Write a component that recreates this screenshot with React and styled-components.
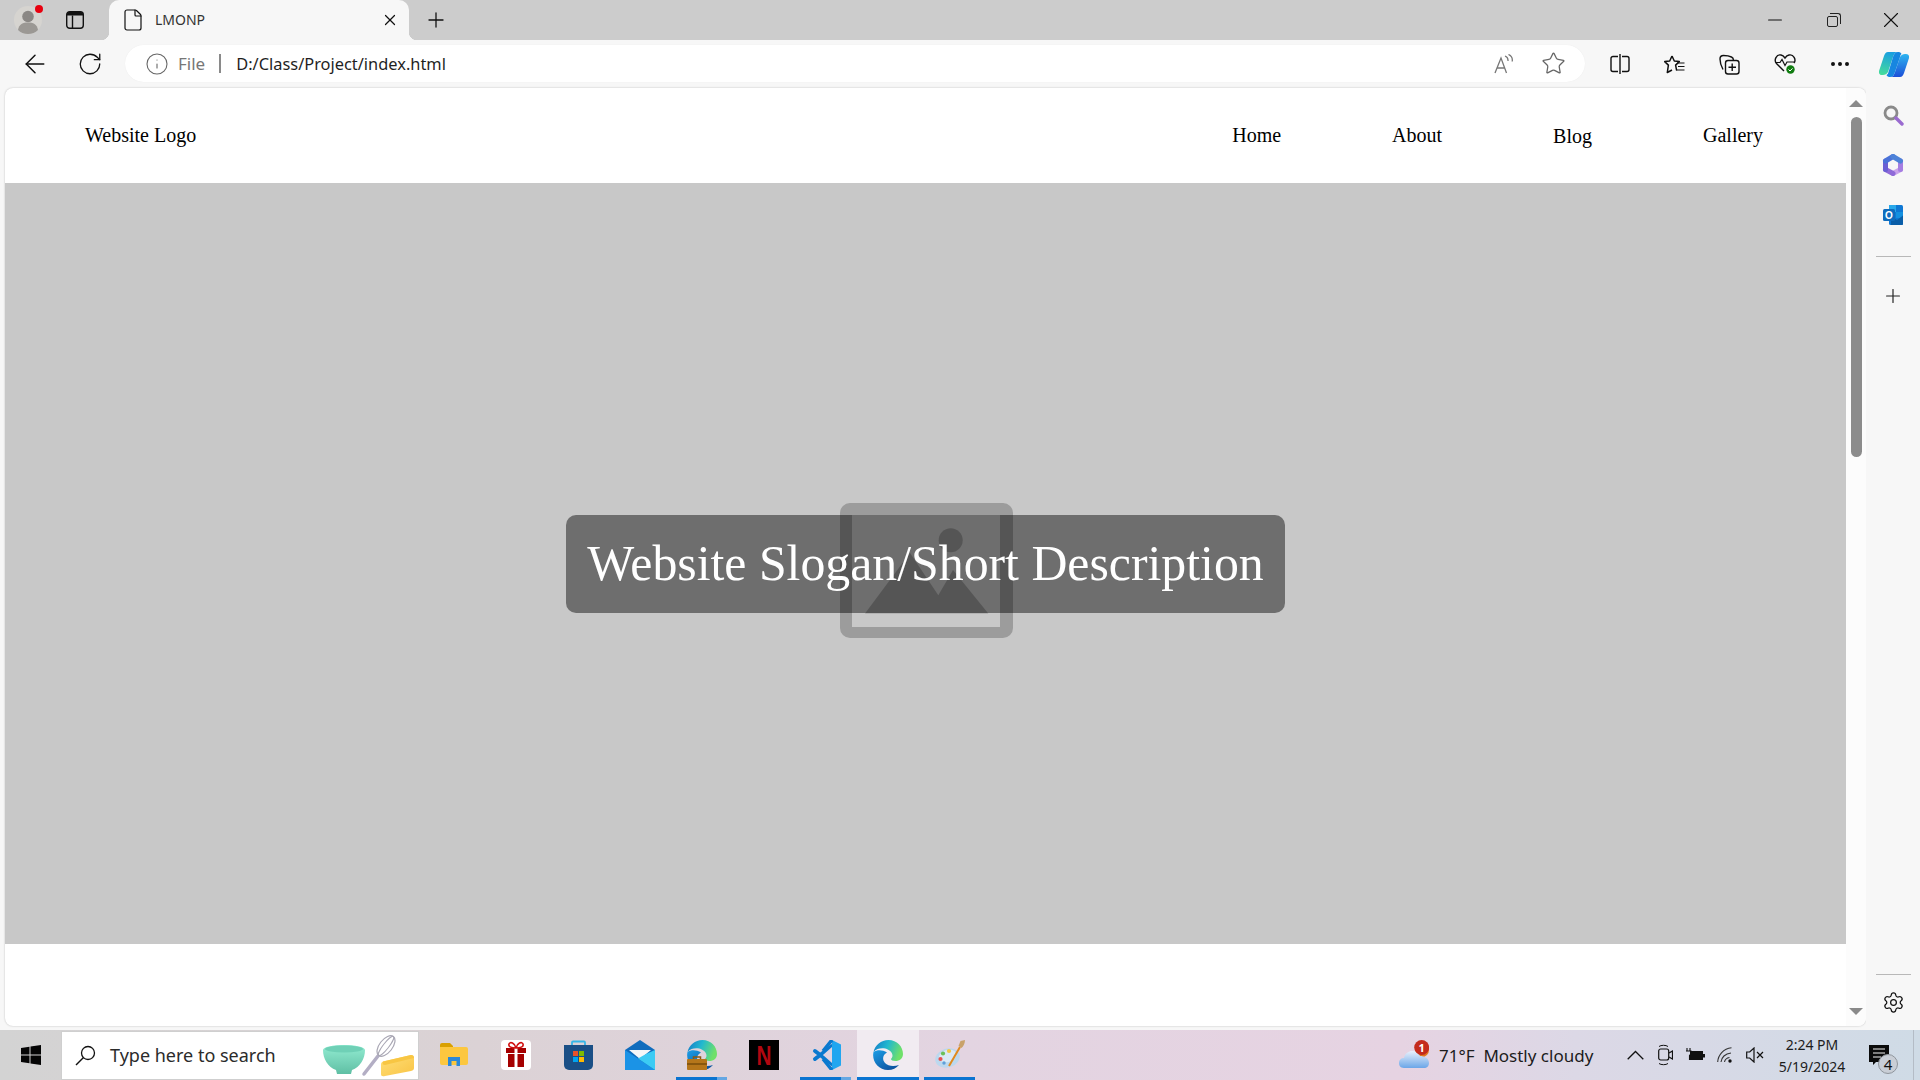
import React from 'react';
import styled, { createGlobalStyle } from 'styled-components';
import {
  ArrowLeft,
  RotateCw,
  Info,
  Star,
  Plus,
  X,
  Minus,
  Settings,
  Ellipsis,
  File as FileIcon,
} from 'lucide-react';

const GlobalStyle = createGlobalStyle`
  html, body {
    margin: 0;
    padding: 0;
    background: #f7f7f7;
  }
  body {
    font-family: "Noto Sans", "Open Sans", sans-serif;
    overflow: hidden;
  }
  * {
    box-sizing: border-box;
  }
`;

const Screen = styled.div`
  width: 1920px;
  height: 1080px;
  display: flex;
  flex-direction: column;
  overflow: hidden;
`;

/* browser chrome */
const TabStrip = styled.div`
  height: 40px;
  background: #cccccc;
  display: flex;
  align-items: center;
  padding-left: 14px;
  flex-shrink: 0;
`;

const Avatar = styled.div`
  position: relative;
  width: 28px;
  height: 28px;
  border-radius: 50%;
  background: #d6d4d0;
  overflow: visible;
  display: flex;
  margin-right: 24px;
  &::after {
    content: '';
    position: absolute;
    top: -1px;
    right: -1px;
    width: 8px;
    height: 8px;
    border-radius: 50%;
    background: #e8000f;
  }
`;

const TabsButton = styled.div`
  width: 18px;
  height: 18px;
  display: flex;
  margin-right: 25px;
`;

const Tab = styled.div`
  position: relative;
  width: 300px;
  height: 40px;
  background: #f7f7f7;
  border-radius: 10px 10px 0 0;
  display: flex;
  align-items: center;
  padding: 0 10px 1px 12px;
  color: #333333;
  font-size: 14px;
  &::before,
  &::after {
    content: '';
    position: absolute;
    bottom: 0;
    width: 8px;
    height: 8px;
  }
  &::before {
    left: -8px;
    background: radial-gradient(circle at 0 0, transparent 8px, #f7f7f7 8.5px);
  }
  &::after {
    right: -8px;
    background: radial-gradient(circle at 100% 0, transparent 8px, #f7f7f7 8.5px);
  }
`;

const TabTitle = styled.span`
  flex: 1;
  margin-left: 10px;
`;

const NewTab = styled.div`
  width: 54px;
  display: flex;
  justify-content: center;
`;

const WindowControls = styled.div`
  margin-left: auto;
  display: flex;
  height: 40px;
`;

const WindowButton = styled.div`
  width: 58px;
  display: flex;
  align-items: center;
  justify-content: center;
`;

const RestoreIcon = styled.div`
  position: relative;
  width: 11px;
  height: 11px;
  border: 1px solid #222;
  border-radius: 2px;
  margin-top: 2px;
  margin-right: 2px;
  &::after {
    content: '';
    position: absolute;
    top: -4px;
    right: -4px;
    width: 10px;
    height: 10px;
    border-top: 1px solid #222;
    border-right: 1px solid #222;
    border-radius: 0 3px 0 0;
  }
`;

const Toolbar = styled.div`
  height: 48px;
  background: #f7f7f7;
  display: flex;
  align-items: center;
  padding-left: 7px;
  flex-shrink: 0;
`;

const ToolSlot = styled.div`
  width: ${({ $w }) => $w || 55}px;
  height: 37px;
  display: flex;
  align-items: center;
  justify-content: center;
  flex-shrink: 0;
`;

const AddressBar = styled.div`
  width: 1460px;
  height: 37px;
  margin: -1px 7px 0 8px;
  background: #ffffff;
  border-radius: 19px;
  display: flex;
  align-items: center;
  padding: 0 19px 0 20px;
  box-shadow: 0 0 1px rgba(0, 0, 0, 0.08);
`;

const FileLabel = styled.span`
  margin-left: 9px;
  font-size: 17px;
  color: #777777;
`;

const Divider = styled.span`
  width: 2px;
  height: 19px;
  margin: 0 15px 0 14px;
  background: #8a8a8a;
`;

const Url = styled.span`
  flex: 1;
  font-size: 16.4px;
  color: #1f1f1f;
`;

const AddressActions = styled.div`
  display: flex;
  align-items: center;
  gap: 27px;
`;

/* page area */
const Body = styled.div`
  flex: 1;
  display: flex;
  min-height: 0;
`;

const Page = styled.div`
  width: 1861px;
  height: 938px;
  margin-left: 5px;
  background: #ffffff;
  border-radius: 8px;
  box-shadow: 0 0 2px rgba(0, 0, 0, 0.25);
  overflow: hidden;
  display: flex;
`;

const Viewport = styled.div`
  width: 1841px;
  display: flex;
  flex-direction: column;
`;

const Nav = styled.nav`
  height: 95px;
  display: flex;
  align-items: center;
  justify-content: space-between;
  padding: 0 83px 0 80px;
  flex-shrink: 0;
  font-family: "Liberation Serif", "Times New Roman", serif;
  font-size: 20px;
  color: #000000;
`;

const NavList = styled.div`
  display: flex;
  align-items: center;
  gap: 111px;
`;

const NavLink = styled.a`
  padding-top: ${({ $drop }) => ($drop ? 2 : 0)}px;
`;

const Hero = styled.section`
  height: 761px;
  background: #c8c8c8;
  display: grid;
  place-items: center;
  flex-shrink: 0;
  > * {
    grid-area: 1 / 1;
  }
`;

const BrokenImage = styled.svg`
  width: 173px;
  height: 135px;
  margin: 13px 0 0 2px;
`;

const Slogan = styled.h1`
  margin: 0;
  padding: 20px 21px;
  background: rgba(0, 0, 0, 0.45);
  border-radius: 10px;
  color: #ffffff;
  font-family: "Liberation Serif", "Times New Roman", serif;
  font-size: 49.8px;
  line-height: 58px;
  font-weight: 400;
  white-space: nowrap;
`;

const Scrollbar = styled.div`
  width: 20px;
  background: #fcfcfc;
  display: flex;
  flex-direction: column;
  align-items: center;
  padding: 12px 0 11px;
`;

const Arrow = styled.div`
  width: 0;
  height: 0;
  border-left: 7px solid transparent;
  border-right: 7px solid transparent;
  ${({ $down }) =>
    $down
      ? 'border-top: 7px solid #8a8a8a; margin-top: auto;'
      : 'border-bottom: 7px solid #8a8a8a;'}
`;

const Thumb = styled.div`
  width: 11px;
  height: 340px;
  margin-top: 10px;
  border-radius: 6px;
  background: #8c8c8c;
`;

const Sidebar = styled.aside`
  width: 54px;
  display: flex;
  flex-direction: column;
  align-items: center;
  background: #f7f7f7;
  padding: 2px 0 3px;
`;

const SideButton = styled.div`
  width: 54px;
  height: 50px;
  display: flex;
  align-items: center;
  justify-content: center;
  flex-shrink: 0;
`;

const SideRule = styled.div`
  width: 35px;
  height: 1px;
  background: #b8b8b8;
  flex-shrink: 0;
  margin: ${({ $bottom }) => ($bottom ? 'auto 0 2px' : '16px 0 14px')};
`;

/* windows taskbar */
const Taskbar = styled.footer`
  height: 50px;
  flex-shrink: 0;
  display: flex;
  align-items: stretch;
  background: linear-gradient(90deg, #d3d3d3 0%, #dbd2d5 25%, #e3d4e1 50%, #e6d3e2 73%, #dcd8e6 82%, #cfdbe6 100%);
`;

const StartButton = styled.div`
  width: 61px;
  display: flex;
  align-items: center;
  justify-content: center;
`;

const SearchBox = styled.div`
  width: 358px;
  height: 49px;
  margin-top: 1px;
  background: #ffffff;
  border: 1px solid #cfcfcf;
  display: flex;
  align-items: center;
  padding: 0 3px 0 13px;
  color: #2b2b2b;
  font-size: 18px;
`;

const SearchText = styled.span`
  flex: 1;
  margin: 0 0 2px 14px;
`;

const Apps = styled.div`
  display: flex;
  margin-left: 4px;
`;

const AppButton = styled.div`
  position: relative;
  width: 62px;
  display: flex;
  align-items: center;
  justify-content: center;
  background: ${({ $active }) => ($active ? '#f1ebf1' : 'transparent')};
  &::after {
    content: '';
    display: ${({ $open }) => ($open ? 'block' : 'none')};
    position: absolute;
    bottom: 0;
    left: ${({ $active }) => ($active ? 0 : 5)}px;
    right: ${({ $active }) => ($active ? 0 : 6)}px;
    height: 3px;
    background: ${({ $stack }) =>
      $stack ? 'linear-gradient(90deg, #0a74d1 80%, #65a7e3 80%)' : '#0a74d1'};
  }
`;

const Tray = styled.div`
  margin-left: auto;
  display: flex;
  align-items: center;
`;

const Weather = styled.div`
  width: 221px;
  display: flex;
  align-items: center;
  color: #1c1c1c;
  font-size: 17px;
  white-space: pre;
`;

const WeatherText = styled.span`
  margin-left: 10px;
`;

const TraySlot = styled.div`
  width: 30px;
  display: flex;
  justify-content: center;
`;

const Clock = styled.div`
  width: 84px;
  display: flex;
  flex-direction: column;
  align-items: center;
  gap: 1px;
  color: #1c1c1c;
  font-size: 14px;
  line-height: 21px;
`;

const Notifications = styled.div`
  position: relative;
  width: 60px;
  height: 50px;
  padding: 15px 0 0 15px;
  border-right: 1px solid #b4bcc6;
  margin-right: 6px;
`;

const CountBadge = styled.div`
  position: absolute;
  left: 24px;
  top: 24px;
  width: 20px;
  height: 20px;
  border-radius: 50%;
  border: 1px solid #8f959c;
  background: #c9ced6;
  color: #111111;
  font-size: 15px;
  line-height: 18px;
  text-align: center;
`;

const MiniSvg = ({ w, h = w, vb, children }) => (
  <svg width={w} height={h} viewBox={vb || `0 0 ${w} ${h}`} fill="none">
    {children}
  </svg>
);

const Person = () => (
  <MiniSvg w={28} vb="0 0 28 28">
    <circle cx="14" cy="10.5" r="5.8" fill="#8a8784" />
    <path d="M4 24c1-6 5-7.5 10-7.5S23 18 24 24c-2.5 2.5-6 4-10 4s-7.5-1.5-10-4z" fill="#9b9894" />
  </MiniSvg>
);

const TabsIcon = () => (
  <MiniSvg w={18}>
    <rect x="0.7" y="0.7" width="16.6" height="16.6" rx="3" stroke="#111" strokeWidth="1.4" />
    <path d="M1 4.5V3a2 2 0 0 1 2-2h12a2 2 0 0 1 2 2v1.5z" fill="#111" />
    <path d="M6.5 4.5v12.5" stroke="#111" strokeWidth="1.4" />
  </MiniSvg>
);

const ReadAloud = () => (
  <MiniSvg w={20} vb="0 0 20 20">
    <path d="M1 19L7 4l5.5 15M3 14h8" stroke="#777" strokeWidth="1.3" />
    <path d="M11 2c2 .7 3.2 2.6 3 5M14.500 0.500c2.700 1.200 4.200 4 3.700 7" stroke="#777" strokeWidth="1.3" />
  </MiniSvg>
);

const SplitIcon = () => (
  <MiniSvg w={20} vb="0 0 20 20">
    <path d="M8 2.500H3a2 2 0 0 0-2 2v11a2 2 0 0 0 2 2h5M12 2.500h5a2 2 0 0 1 2 2v11a2 2 0 0 1-2 2h-5" stroke="#111" strokeWidth="1.4" />
    <path d="M10 0v20" stroke="#111" strokeWidth="1.4" />
  </MiniSvg>
);

const FavoritesIcon = () => (
  <MiniSvg w={21} vb="0 0 21 20">
    <path d="M8 1.500l2.300 5 5 .6-3.700 3.500 1 5.200" stroke="#111" strokeWidth="1.5" strokeLinejoin="round" />
    <path d="M8 1.500L5.700 6.500l-5 .6 3.700 3.500-1.100 7.400L8 15.500" stroke="#111" strokeWidth="1.5" strokeLinejoin="round" />
    <path d="M13 8.500h7.500M14 12h6.500M12 15.500h8.500" stroke="#111" strokeWidth="1.2" />
  </MiniSvg>
);

const CollectionsIcon = () => (
  <MiniSvg w={21} vb="0 0 21 21">
    <rect x="6.500" y="6.500" width="13.500" height="13.500" rx="2.500" stroke="#111" strokeWidth="1.4" />
    <path d="M13.200 9.500v7.500M9.500 13.200h7.500" stroke="#111" strokeWidth="1.4" />
    <path d="M4 15.500C2 12 1 8 1 5c0-2 1.500-3.500 3.500-3.500 3 0 6 .5 8 1.500 1.500.6 2 2 2 3.500" stroke="#111" strokeWidth="1.4" />
  </MiniSvg>
);

const HealthIcon = () => (
  <MiniSvg w={22} vb="0 0 22 22">
    <path d="M10 18L2.500 10.500C-.5 7 2.500 1 7 2c2 .4 3 1.600 4 3 1-1.400 2-2.600 4-3 4.500-1 7.500 4.500 5 8" stroke="#111" strokeWidth="1.4" />
    <path d="M1.500 9.500H6l2-3 3 6 2-3.500h7" stroke="#111" strokeWidth="1.2" />
    <circle cx="16.500" cy="16.500" r="4.200" fill="#107c10" />
    <path d="M14.500 16.500l1.500 1.500 2.500-2.600" stroke="#fff" strokeWidth="1" />
  </MiniSvg>
);

const Copilot = () => (
  <MiniSvg w={30} h={27} vb="0 0 30 27">
    <defs>
      <linearGradient id="cpA" x1="0.500" y1="0" x2="0.300" y2="1">
        <stop offset="0" stopColor="#1a9fe0" />
        <stop offset="1" stopColor="#45dc9c" />
      </linearGradient>
      <linearGradient id="cpB" x1="0.500" y1="0" x2="0.500" y2="1">
        <stop offset="0" stopColor="#2db4f0" />
        <stop offset="1" stopColor="#1c4fd8" />
      </linearGradient>
    </defs>
    <path d="M9 1h10c-3 0-4 2-5 5l-5 15c-1 2-3 3-5 3H3c-2.500 0-3.500-2-3-4L5 5c1-2.500 2-4 4-4z" fill="url(#cpA)" />
    <path d="M21 26H11c3 0 4-2 5-5l5-15c1-2 3-3 5-3h1c2.500 0 3.500 2 3 4l-5 15c-1 2.500-2 4-4 4z" fill="url(#cpB)" />
    <path d="M14 6c1-3 2-5 5-5 1.500 0 3 .6 3.500 2-1 .5-1.200 1.500-1.500 3l-5 15c-1 3-2 5-5 5-1.500 0-3-.6-3.500-2 1-.5 1.700-1.500 2-3z" fill="#1786e0" />
  </MiniSvg>
);

const LensIcon = () => (
  <MiniSvg w={21} vb="0 0 21 21">
    <circle cx="8" cy="8" r="6" stroke="#8a8a8a" strokeWidth="2.800" />
    <path d="M13 13l6 6" stroke="#9a6bd0" strokeWidth="3.400" strokeLinecap="round" />
  </MiniSvg>
);

const M365Icon = () => (
  <MiniSvg w={22} vb="0 0 22 22">
    <g strokeWidth="5" strokeLinecap="round">
      <path d="M18.500 15.500L11 19.500" stroke="#c9a2ea" />
      <path d="M18.500 7v8.500" stroke="#a57ee2" />
      <path d="M11 19.500l-7.500-4" stroke="#8f6ad8" />
      <path d="M3.500 15.500V7" stroke="#6a5fd4" />
      <path d="M3.500 7L11 2.500" stroke="#4a72d8" />
      <path d="M11 2.500L18.500 7" stroke="#4d82d8" />
    </g>
  </MiniSvg>
);

const OutlookIcon = () => (
  <MiniSvg w={20} vb="0 0 20 20">
    <rect x="6" y="0" width="14" height="20" rx="1.500" fill="#0f78d4" />
    <path d="M6 0h7v7H6z" fill="#28a8ea" />
    <path d="M13 7h7v6h-7z" fill="#1490df" />
    <path d="M8 11l6 4 6-4.500V19a1 1 0 0 1-1 1H8z" fill="#0a5ea8" />
    <rect x="0" y="4" width="12" height="12" rx="1.500" fill="#0f6cbd" />
    <text x="6" y="13.600" textAnchor="middle" fontSize="10" fontWeight="700" fill="#fff" fontFamily="Liberation Sans, sans-serif">O</text>
  </MiniSvg>
);

const WindowsLogo = () => (
  <MiniSvg w={20} vb="0 0 20 20">
    <path d="M0 3l8.500-1.200v7.700H0zM9.500 1.600L20 0v9.500H9.500zM0 10.500h8.500v7.700L0 17zM9.500 10.500H20V20L9.500 18.400z" fill="#050505" />
  </MiniSvg>
);

const Lens = () => (
  <MiniSvg w={21} vb="0 0 21 21">
    <circle cx="13" cy="8" r="6.500" stroke="#111" strokeWidth="1.300" />
    <path d="M8.500 12.500L1 20" stroke="#111" strokeWidth="1.500" />
  </MiniSvg>
);

const BowlArt = () => (
  <MiniSvg w={92} h={42} vb="0 0 92 42">
    <defs>
      <linearGradient id="bowlG" x1="0" y1="0" x2="0" y2="1">
        <stop offset="0" stopColor="#93ecd2" />
        <stop offset="1" stopColor="#5fbfa4" />
      </linearGradient>
      <linearGradient id="butterG" x1="0" y1="0" x2="1" y2="1">
        <stop offset="0" stopColor="#ffdf78" />
        <stop offset="1" stopColor="#f9c445" />
      </linearGradient>
    </defs>
    <path d="M0 15c0-3 10-5 21-5s21 2 21 5c0 9-5 17-13 20l-1 4H14l-1-4C5 32 0 24 0 15z" fill="url(#bowlG)" />
    <ellipse cx="21" cy="14" rx="19" ry="3.500" fill="#6fd0b6" />
    <path d="M41 39l14-18" stroke="#b3aec4" strokeWidth="3.500" strokeLinecap="round" />
    <ellipse cx="63" cy="11" rx="6.500" ry="12" transform="rotate(38 63 11)" stroke="#a9a7b4" strokeWidth="1.200" />
    <ellipse cx="63" cy="11" rx="2.800" ry="12" transform="rotate(38 63 11)" stroke="#a9a7b4" strokeWidth="1" />
    <path d="M58 29c0-1 1-2 2-2.500L88 20c2 0 3 1 3 3v10c0 1.500-1 2.500-3 3l-26 5c-3 .5-4 0-4-2z" fill="url(#butterG)" />
    <path d="M60 26.500L88 20c2 0 3 1 3 3l-29 7c-2 0-3-1-2-3.500z" fill="#f8c643" />
  </MiniSvg>
);

const FolderIcon = () => (
  <MiniSvg w={28} h={24} vb="0 0 28 24">
    <path d="M0 2a2 2 0 0 1 2-2h8l3 3h0v3H0z" fill="#d9a000" />
    <path d="M0 4h26a2 2 0 0 1 2 2v14a2 2 0 0 1-2 2H2a2 2 0 0 1-2-2z" fill="#fcc73f" />
    <path d="M8 23v-9h12v9h-3.500v-5h-5v5z" fill="#2b88d8" />
  </MiniSvg>
);

const GiftIcon = () => (
  <MiniSvg w={30} vb="0 0 30 30">
    <rect width="30" height="30" rx="4" fill="#ffffff" />
    <path d="M5 8h20v5H5zM7 14h16v13H7z" fill="#a50000" />
    <path d="M13.500 8h3v19h-3z" fill="#fff" />
    <path d="M15 8C11 8 7 7 8 4s6-1 7 4c1-5 6-7 7-4s-3 4-7 4z" stroke="#d01010" strokeWidth="1.600" />
  </MiniSvg>
);

const StoreIcon = () => (
  <MiniSvg w={29} h={30} vb="0 0 29 30">
    <path d="M8 6V2.500a1 1 0 0 1 1-1h11a1 1 0 0 1 1 1V6" stroke="#35b6e8" strokeWidth="1.800" />
    <path d="M0 5h29v20a5 5 0 0 1-5 5H5a5 5 0 0 1-5-5z" fill="#1a4f86" />
    <rect x="9" y="11" width="5" height="5" fill="#e8522a" />
    <rect x="15" y="11" width="5" height="5" fill="#7fb900" />
    <rect x="9" y="17" width="5" height="5" fill="#00a4ef" />
    <rect x="15" y="17" width="5" height="5" fill="#ffb900" />
  </MiniSvg>
);

const MailIcon = () => (
  <MiniSvg w={30} vb="0 0 30 30">
    <path d="M0 10L15 0l15 10v20H0z" fill="#0f6cbd" />
    <path d="M4 10h22l-11 9z" fill="#f4f6f8" />
    <path d="M0 10l30 20H0z" fill="#1b93e6" />
    <path d="M30 10v20L13 18.500 21 14z" fill="#3ccbf4" />
  </MiniSvg>
);

const EdgeIcon = ({ id = 'e', briefcase }) => (
  <MiniSvg w={30} vb="0 0 30 30">
    <defs>
      <linearGradient id={`${id}T`} x1="0" y1="0" x2="1" y2="0.300">
        <stop offset="0" stopColor="#1478c8" />
        <stop offset="0.500" stopColor="#22b8cf" />
        <stop offset="1" stopColor="#6fe06a" />
      </linearGradient>
      <linearGradient id={`${id}B`} x1="0" y1="0" x2="0.800" y2="1">
        <stop offset="0" stopColor="#1c9ee6" />
        <stop offset="1" stopColor="#0b4f9c" />
      </linearGradient>
    </defs>
    <path d="M0.500 12C2 5 8 0 15.500 0 24 0 30 6.500 30 14c0 4.500-3.500 7-7.500 7-3 0-4.500-1-4.500-2 1.500-1.500 2-3.500 1-5.500C16.500 8 6 6 0.500 12z" fill={`url(#${id}T)`} />
    <path d="M0.500 12C-1.500 21 5 30 15 30c4.500 0 8.500-2 11-5-4.500 1.500-11 1.500-14-2-3-3.500-2.500-8 2-10.500C9.500 9.500 4 9.500 0.500 12z" fill={`url(#${id}B)`} />
    {briefcase && (
      <g>
        <rect x="0" y="19" width="20" height="11" rx="1" fill="#b5761a" />
        <path d="M6.500 19v-2h7v2" stroke="#8a5a10" strokeWidth="1.500" />
        <path d="M0 24h20" stroke="#6b4408" strokeWidth="1.200" />
      </g>
    )}
  </MiniSvg>
);

const NetflixIcon = () => (
  <MiniSvg w={30} vb="0 0 30 30">
    <rect width="30" height="30" fill="#000" />
    <text x="15" y="25" textAnchor="middle" fontSize="27" fontWeight="700" fill="#b20710" fontFamily="Liberation Sans, sans-serif" textLength="15" lengthAdjust="spacingAndGlyphs">N</text>
  </MiniSvg>
);

const CodeIcon = () => (
  <MiniSvg w={30} vb="0 0 30 30">
    <path d="M4 11l17 13M4 19L21 6" stroke="#0a79cf" strokeWidth="4" strokeLinecap="round" />
    <path d="M21 0l9 4.500v21L21 30z" fill="#21a6f0" />
    <path d="M21 7v16l-9-8z" fill="#e0d4e2" />
    <path d="M21 0l-9 11M21 30l-9-11" stroke="#0a79cf" strokeWidth="3.500" />
  </MiniSvg>
);

const PaintIcon = () => (
  <MiniSvg w={30} vb="0 0 30 30">
    <ellipse cx="12.500" cy="18" rx="12.500" ry="9.500" transform="rotate(-18 12.500 18)" fill="#bcd8ee" />
    <ellipse cx="12.500" cy="16" rx="9" ry="6" transform="rotate(-18 12.500 16)" fill="#dbe9f5" />
    <circle cx="5.500" cy="19" r="2.100" fill="#e8524f" />
    <circle cx="8" cy="13.500" r="2.100" fill="#6bbf59" />
    <circle cx="14" cy="11" r="2.100" fill="#f2c744" />
    <circle cx="9" cy="23" r="1.700" fill="#5f9fd8" />
    <path d="M14 26L25 7" stroke="#e08a1e" strokeWidth="2" />
    <path d="M23.500 6l2-5 4.500-1c0 3-1.500 6.500-3.500 8z" fill="#c9a26a" />
  </MiniSvg>
);

const CloudIcon = () => (
  <svg width="30" height="30" viewBox="0 0 30 30" fill="none">
    <defs>
      <linearGradient id="cloudG" x1="0" y1="0" x2="0" y2="1">
        <stop offset="0" stopColor="#e8f0fb" />
        <stop offset="1" stopColor="#6ba6e8" />
      </linearGradient>
    </defs>
    <circle cx="23" cy="10" r="7" fill="#e07820" />
    <path d="M5 28C1 28 0 25 0 23c0-3 2-5 5-5 1-5 5-7 8-7 4 0 7 2 8 5 4 0 9 2 9 7 0 3-2 5-5 5z" fill="url(#cloudG)" />
    <circle cx="22.700" cy="7.500" r="7.500" fill="#c42b1c" />
    <text x="22.700" y="11.500" textAnchor="middle" fontSize="11" fontWeight="700" fill="#fff" fontFamily="Noto Sans, sans-serif">1</text>
  </svg>
);

const ChevronTray = () => (
  <MiniSvg w={17} h={10} vb="0 0 17 10">
    <path d="M0.700 9.300L8.500 1.500l7.800 7.800" stroke="#111" strokeWidth="1.300" />
  </MiniSvg>
);

const CameraTray = () => (
  <MiniSvg w={15} h={22} vb="0 0 15 22">
    <rect x="0.700" y="5" width="10" height="11" rx="2" stroke="#111" strokeWidth="1.200" />
    <path d="M11 9l3.500-2v8L11 13" stroke="#111" strokeWidth="1.200" />
    <path d="M1 2.500c2-1.600 7-1.600 9 0M1 19.500c2 1.600 7 1.600 9 0" stroke="#111" strokeWidth="1" />
  </MiniSvg>
);

const BatteryTray = () => (
  <MiniSvg w={20} h={14} vb="0 0 20 14">
    <path d="M2 0v3M5 0v3M1 3h5v3l-1.500 1.500V12" stroke="#111" strokeWidth="1.100" />
    <rect x="5.500" y="3.500" width="12" height="8" fill="#111" stroke="#111" />
    <rect x="18" y="6" width="2" height="3.500" fill="#111" />
  </MiniSvg>
);

const WifiTray = () => (
  <MiniSvg w={16} vb="0 0 16 16">
    <path d="M0.700 15C1 8 6.500 1.500 14.500 0.800M4 15c.5-4.500 4-8.500 10-9M7.500 15c.4-2.200 2-4 5-4.500" stroke="#333" strokeWidth="1.100" />
    <circle cx="13" cy="14" r="1.700" fill="#111" />
  </MiniSvg>
);

const SpeakerTray = () => (
  <MiniSvg w={18} h={16} vb="0 0 18 16">
    <path d="M0.700 5h3L8 1v14l-4.300-4H0.700z" stroke="#111" strokeWidth="1.200" />
    <path d="M11 5l6 6M17 5l-6 6" stroke="#111" strokeWidth="1.200" />
  </MiniSvg>
);

const BubbleIcon = () => (
  <MiniSvg w={20} h={20} vb="0 0 20 20">
    <path d="M0 0h20v17H7l-3 3v-3H0z" fill="#0b0b0b" />
    <path d="M4 4h12M4 8h12M4 12h8" stroke="#f2f2f2" strokeWidth="1" />
  </MiniSvg>
);

const NAV_ITEMS = [
  { label: 'Home' },
  { label: 'About' },
  { label: 'Blog', drop: true },
  { label: 'Gallery' },
];

const APPS = [
  { key: 'folder', icon: <FolderIcon /> },
  { key: 'gift', icon: <GiftIcon /> },
  { key: 'store', icon: <StoreIcon /> },
  { key: 'mail', icon: <MailIcon /> },
  { key: 'edgedev', icon: <EdgeIcon id="ed" briefcase />, open: true, stack: true },
  { key: 'netflix', icon: <NetflixIcon /> },
  { key: 'code', icon: <CodeIcon />, open: true, stack: true },
  { key: 'edge', icon: <EdgeIcon id="eg" />, open: true, active: true },
  { key: 'paint', icon: <PaintIcon />, open: true },
];

const App = () => (
  <Screen>
    <GlobalStyle />
    <TabStrip>
      <Avatar>
        <Person />
      </Avatar>
      <TabsButton>
        <TabsIcon />
      </TabsButton>
      <Tab>
        <FileIcon size={24} strokeWidth={1.2} color="#111" />
        <TabTitle>LMONP</TabTitle>
        <X size={18} strokeWidth={1.6} color="#111" />
      </Tab>
      <NewTab>
        <Plus size={24} strokeWidth={1.3} color="#111" />
      </NewTab>
      <WindowControls>
        <WindowButton>
          <Minus size={22} strokeWidth={1.1} color="#111" />
        </WindowButton>
        <WindowButton>
          <RestoreIcon />
        </WindowButton>
        <WindowButton>
          <X size={26} strokeWidth={1} color="#111" />
        </WindowButton>
      </WindowControls>
    </TabStrip>

    <Toolbar>
      <ToolSlot>
        <ArrowLeft size={30} strokeWidth={1.2} color="#111" />
      </ToolSlot>
      <ToolSlot>
        <RotateCw size={26} strokeWidth={1.2} color="#111" />
      </ToolSlot>
      <AddressBar>
        <Info size={24} strokeWidth={1.1} color="#666" />
        <FileLabel>File</FileLabel>
        <Divider />
        <Url>D:/Class/Project/index.html</Url>
        <AddressActions>
          <ReadAloud />
          <Star size={25} strokeWidth={1.2} color="#666" />
        </AddressActions>
      </AddressBar>
      <ToolSlot><SplitIcon /></ToolSlot>
      <ToolSlot><FavoritesIcon /></ToolSlot>
      <ToolSlot><CollectionsIcon /></ToolSlot>
      <ToolSlot><HealthIcon /></ToolSlot>
      <ToolSlot>
        <Ellipsis size={24} strokeWidth={2} color="#111" />
      </ToolSlot>
      <ToolSlot $w={53}><Copilot /></ToolSlot>
    </Toolbar>

    <Body>
      <Page>
        <Viewport>
          <Nav>
            <span>Website Logo</span>
            <NavList>
              {NAV_ITEMS.map((item) => (
                <NavLink key={item.label} $drop={item.drop}>
                  {item.label}
                </NavLink>
              ))}
            </NavList>
          </Nav>
          <Hero>
            <BrokenImage viewBox="0 0 173 135">
              <path
                fillRule="evenodd"
                fill="#9c9c9c"
                d="M10 0h153a10 10 0 0 1 10 10v115a10 10 0 0 1-10 10H10a10 10 0 0 1-10-10V10A10 10 0 0 1 10 0zM12 12v112h148V12z"
              />
              <circle cx="110.700" cy="37.300" r="12" fill="#9c9c9c" />
              <path d="M25 110.500L70 50l28.300 42.300L113 67l35.300 43.500z" fill="#9c9c9c" />
            </BrokenImage>
            <Slogan>Website Slogan/Short Description</Slogan>
          </Hero>
        </Viewport>
        <Scrollbar>
          <Arrow />
          <Thumb />
          <Arrow $down />
        </Scrollbar>
      </Page>
      <Sidebar>
        <SideButton><LensIcon /></SideButton>
        <SideButton><M365Icon /></SideButton>
        <SideButton><OutlookIcon /></SideButton>
        <SideRule />
        <SideButton>
          <Plus size={22} strokeWidth={1.3} color="#222" />
        </SideButton>
        <SideRule $bottom />
        <SideButton>
          <Settings size={23} strokeWidth={1.3} color="#111" />
        </SideButton>
      </Sidebar>
    </Body>

    <Taskbar>
      <StartButton>
        <WindowsLogo />
      </StartButton>
      <SearchBox>
        <Lens />
        <SearchText>Type here to search</SearchText>
        <BowlArt />
      </SearchBox>
      <Apps>
        {APPS.map((app) => (
          <AppButton key={app.key} $open={app.open} $active={app.active} $stack={app.stack}>
            {app.icon}
          </AppButton>
        ))}
      </Apps>
      <Tray>
        <Weather>
          <CloudIcon />
          <WeatherText>71°F  Mostly cloudy</WeatherText>
        </Weather>
        <TraySlot><ChevronTray /></TraySlot>
        <TraySlot><CameraTray /></TraySlot>
        <TraySlot><BatteryTray /></TraySlot>
        <TraySlot><WifiTray /></TraySlot>
        <TraySlot><SpeakerTray /></TraySlot>
        <Clock>
          <span>2:24 PM</span>
          <span>5/19/2024</span>
        </Clock>
        <Notifications>
          <BubbleIcon />
          <CountBadge>4</CountBadge>
        </Notifications>
      </Tray>
    </Taskbar>
  </Screen>
);

export default App;
